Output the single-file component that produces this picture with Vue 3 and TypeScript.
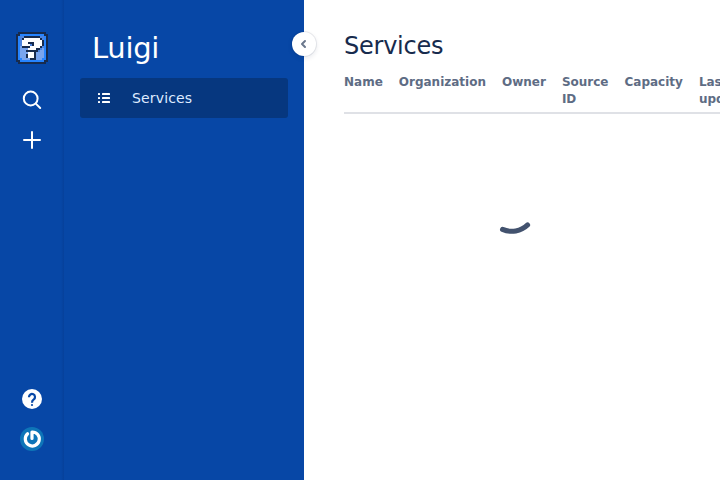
<script setup lang="ts">
const columns: string[] = ['Name', 'Organization', 'Owner', 'Source ID', 'Capacity', 'Last updated']

const palette: Record<string, string> = {
  k: '#172b4d',
  b: '#2684ff',
  l: '#79a5ee',
  m: '#4c84e0',
  w: '#ffffff',
}
const sprite: string[] = [
  '.kkkkkkkkkkkkkk.',
  'kkbbbbbbbbbbbbkk',
  'kbmmkkkkkkkkmmbk',
  'kbmkwwwwwwwwkmbk',
  'kbmwwwwwwwwwwkbk',
  'kbmwwwkkkwwwwkbk',
  'kbmwwwwmkwwwwkbk',
  'kblkkkkwwwwwkmbk',
  'kbllllwwwwkkmlbk',
  'kblllkkkkkkmllbk',
  'kbllllwwwkllllbk',
  'kblllkwwwkllllbk',
  'kblllkwwwkllllbk',
  'kbbllllkkklllbbk',
  'kkbbbbbbbbbbbbkk',
  '.kkkkkkkkkkkkkk.',
]
const pixels = sprite.flatMap((row, y) =>
  [...row].map((c, x) => ({ x, y, fill: palette[c] })).filter((p) => p.fill),
)
</script>

<template>
  <div class="page">
    <nav class="rail">
      <svg class="logo" viewBox="0 0 16 16" shape-rendering="crispEdges">
        <rect v-for="p in pixels" :key="`${p.x}-${p.y}`" :x="p.x" :y="p.y" width="1" height="1" :fill="p.fill" />
      </svg>
      <svg class="icon search" viewBox="0 0 24 24" fill="none" stroke="#fff" stroke-width="2" stroke-linecap="round">
        <circle cx="10.7" cy="10.5" r="6.9" /><path d="M15.8 15.6l4.4 4.4" />
      </svg>
      <svg class="icon plus" viewBox="0 0 24 24" fill="none" stroke="#fff" stroke-width="2" stroke-linecap="round">
        <path d="M12 4v16M4 12h16" />
      </svg>
      <svg class="icon help" viewBox="0 0 24 24" fill="none">
        <circle cx="12" cy="12" r="10" fill="#fff" />
        <path d="M9 10.2V10a3 3 0 1 1 4.8 2.4C12.5 13.3 12 13.8 12 15.8" stroke="#0747a6" stroke-width="2.2" />
        <circle cx="12" cy="18" r="1.1" fill="#0747a6" />
      </svg>
      <svg class="icon avatar" viewBox="0 0 24 24" fill="none">
        <circle cx="12" cy="12" r="12" fill="#0e75b8" />
        <path d="M7.6 6.8A7 7 0 1 0 12 5v6.5" stroke="#fff" stroke-width="3.2" stroke-linecap="round" stroke-linejoin="round" />
      </svg>
    </nav>
    <aside class="sidebar">
      <div class="product">Luigi</div>
      <a class="item">
        <svg class="icon" viewBox="0 0 24 24" fill="#fff">
          <rect x="6" y="7" width="2" height="2" rx=".5" /><rect x="10" y="7" width="8" height="2" rx=".5" />
          <rect x="6" y="11" width="2" height="2" rx=".5" /><rect x="10" y="11" width="8" height="2" rx=".5" />
          <rect x="6" y="15" width="2" height="2" rx=".5" /><rect x="10" y="15" width="8" height="2" rx=".5" />
        </svg>
        <span>Services</span>
      </a>
      <button class="collapse" aria-label="Collapse">
        <svg viewBox="0 0 24 24" fill="none" stroke="#6b778c" stroke-width="2" stroke-linecap="round" stroke-linejoin="round">
          <path d="M13 9l-3 3 3 3" />
        </svg>
      </button>
    </aside>
    <main class="content">
      <h1>Services</h1>
      <div class="head">
        <div v-for="c in columns" :key="c" class="cell">
          <span v-for="word in c.split(' ')" :key="word">{{ word }}</span>
        </div>
      </div>
      <div class="loading">
        <svg viewBox="0 0 48 34" fill="none">
          <path d="M12.5 19.4A23 23 0 0 0 37.6 14.9" stroke="#42526e" stroke-width="5" stroke-linecap="round" />
        </svg>
      </div>
    </main>
  </div>
</template>

<style>
body { margin: 0; overflow: hidden; }
</style>

<style scoped>
.page { display: flex; width: 720px; height: 480px; overflow: hidden; background: #fff; font-family: "DejaVu Sans", sans-serif; font-size: 14px; }
.rail { display: flex; flex-direction: column; align-items: center; box-sizing: border-box; width: 64px; flex: none; padding: 32px 0 29px; background: linear-gradient(to left, #06409a 0, #0747a6 3px); }
.logo { width: 32px; height: 32px; flex: none; }
.icon { width: 24px; height: 24px; flex: none; }
.search { margin-top: 24px; }
.plus { margin-top: 16px; }
.help { margin-top: auto; }
.avatar { margin-top: 16px; }
.sidebar { position: relative; box-sizing: border-box; width: 240px; flex: none; padding: 24px 16px; background: #0747a6; }
.product { height: 54px; padding-left: 12px; line-height: 48px; font-size: 29px; letter-spacing: -0.01em; color: #fff; }
.item { display: flex; align-items: center; height: 40px; padding-left: 12px; gap: 16px; border-radius: 3px; background: #06377f; color: #deebff; letter-spacing: .15px; }
.collapse { position: absolute; top: 32px; right: -12px; width: 24px; height: 24px; padding: 0; border: 0; border-radius: 50%; background: #fff; box-shadow: 0 0 0 1px rgba(9, 30, 66, .08), 0 2px 4px 1px rgba(9, 30, 66, .08); }
.collapse svg { display: block; width: 24px; height: 24px; }
.content { flex: 1; min-width: 0; padding: 32px 0 0 40px; }
h1 { margin: 0; font-size: 24px; line-height: 28px; font-weight: 400; letter-spacing: -0.01em; color: #172b4d; }
.head { display: flex; gap: 16px; width: 600px; height: 38px; margin-top: 14px; border-bottom: 2px solid #dfe1e6; font-size: 12px; line-height: 17px; font-weight: 700; color: #5e6c84; }
.cell { display: flex; flex-direction: column; }
.loading { display: flex; width: 340px; height: 34px; margin-top: 96px; justify-content: center; }
.loading svg { width: 48px; height: 34px; }
</style>
